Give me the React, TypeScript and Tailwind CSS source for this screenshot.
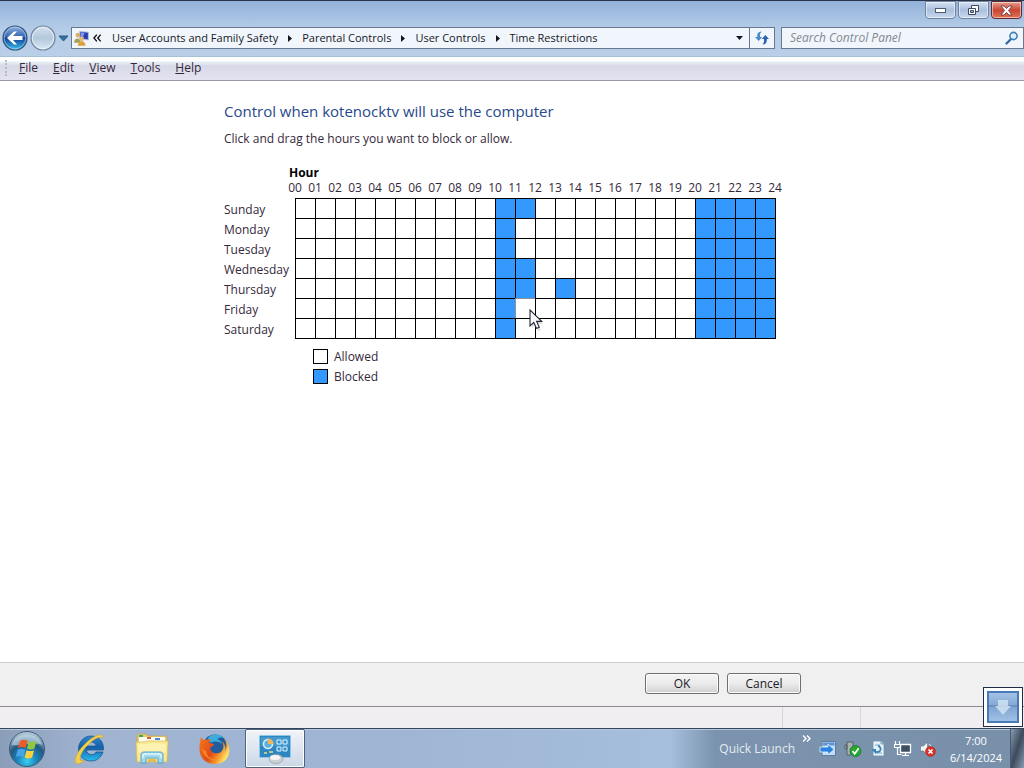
import { useState } from "react";
import type { ReactNode } from "react";

const DAYS = ["Sunday", "Monday", "Tuesday", "Wednesday", "Thursday", "Friday", "Saturday"];
const HOURS = Array.from({ length: 24 }, (_, i) => i);
const EVENING = [20, 21, 22, 23];
const INITIAL: number[][] = [
  [10, 11, ...EVENING],
  [10, ...EVENING],
  [10, ...EVENING],
  [10, 11, ...EVENING],
  [10, 11, 13, ...EVENING],
  [10, ...EVENING],
  [10, ...EVENING],
];

const pad = (n: number) => String(n).padStart(2, "0");

function Pointer() {
  return (
    <svg className="pointer-events-none absolute left-3 top-2.5 z-10" width="16" height="22" viewBox="0 0 16 22">
      <path d="M4 4v15l3-3 3 6 3-1-3-6h5z" fill="#999" opacity=".35" />
      <path d="M2 1v16l3.8-3.6 2.7 6 2.8-1.2-2.7-5.8h5.2z" fill="#f7f9fb" stroke="#222736" strokeWidth="1.1" />
    </svg>
  );
}

function BackIcon() {
  return (
    <svg width="26" height="26" viewBox="0 0 26 26">
      <defs>
        <linearGradient id="back" x1="0" y1="0" x2="0" y2="1">
          <stop offset="0" stopColor="#8fb2e2" />
          <stop offset=".45" stopColor="#3467b8" />
          <stop offset=".5" stopColor="#123f94" />
          <stop offset="1" stopColor="#35c4f2" />
        </linearGradient>
      </defs>
      <circle cx="13" cy="13" r="12" fill="url(#back)" stroke="#3a5379" strokeWidth="1.2" />
      <circle cx="13" cy="13" r="10.8" fill="none" stroke="#c9def5" strokeWidth=".8" opacity=".7" />
      <path d="M5 13l7-6.5h3l-4 4.500h9.500v4H11l4 4.500h-3z" fill="#fff" />
    </svg>
  );
}

function ForwardIcon() {
  return (
    <svg width="26" height="26" viewBox="0 0 26 26">
      <defs>
        <linearGradient id="fwd" x1="0" y1="0" x2="0" y2="1">
          <stop offset="0" stopColor="#d5e2f0" />
          <stop offset=".5" stopColor="#b3c8dc" />
          <stop offset="1" stopColor="#dbeaf5" />
        </linearGradient>
      </defs>
      <circle cx="13" cy="13" r="12" fill="url(#fwd)" stroke="#70849c" strokeWidth="1.2" />
      <circle cx="13" cy="13" r="10.7" fill="none" stroke="#eef5fb" opacity=".8" />
    </svg>
  );
}

function UsersIcon() {
  return (
    <svg width="16" height="16" viewBox="0 0 16 16">
      <path d="M6 1l9 1v8l-9-1z" fill="#2a3fb4" stroke="#b9c3dd" />
      <path d="M7 2l4 .5L9 8l-2-.5z" fill="#8098ec" />
      <circle cx="4" cy="5" r="2.4" fill="#d9ae6a" />
      <path d="M0 13c0-6 7-6 7 0z" fill="#a3a15e" />
      <circle cx="8" cy="9" r="2.5" fill="#e6b877" />
      <path d="M4 16c0-6 8-6 8 0z" fill="#d9a23a" />
    </svg>
  );
}

function RefreshIcon() {
  return (
    <svg width="16" height="16" viewBox="0 0 16 16" fill="#2c62b4">
      <path d="M6.500 1.500C4 2 3 4 3.200 7H1l3.700 4L8.200 7H6C5.800 4.500 6 3 7.500 2z" fill="#4b8acb" />
      <path d="M9.500 14.500c2.500-.5 3.500-2.500 3.300-5.500H15l-3.700-4L7.800 9H10c.2 2.500 0 4-1.500 5z" />
    </svg>
  );
}

function SearchIcon() {
  return (
    <svg width="14" height="14" viewBox="0 0 14 14">
      <path d="M1.500 12.500L6 8" stroke="#3769a2" strokeWidth="2.400" strokeLinecap="round" />
      <circle cx="8.500" cy="5" r="3.600" fill="#e1f1fa" stroke="#3e7fb2" strokeWidth="1.600" />
    </svg>
  );
}

function StartOrb() {
  return (
    <svg width="38" height="38" viewBox="0 0 38 38">
      <defs>
        <radialGradient id="orb" cx=".5" cy=".85" r=".8">
          <stop offset="0" stopColor="#39d0f2" />
          <stop offset=".35" stopColor="#1a84bb" />
          <stop offset=".65" stopColor="#235982" />
          <stop offset="1" stopColor="#b0c7d7" />
        </radialGradient>
      </defs>
      <circle cx="19" cy="19" r="17.500" fill="url(#orb)" stroke="#3c5a75" />
      <path d="M4 15C7 1 31 1 34 15 24 11 14 17 4 15z" fill="#e0eef5" opacity=".5" />
      <path d="M12 11c3-2 5-1.500 7.500-.3L17.700 18c-3-1.300-5-1.200-7.700.2z" fill="#ee5a24" />
      <path d="M20.800 11.200c2.500 1.200 5 1.200 7.700-.2l-2 7.500c-2.700 1.300-4.800 1.100-7.500 0z" fill="#8fc740" />
      <path d="M9.600 19.800c2.700-1.500 5-1.400 7.700-.1l-2 7.200c-2.500-1.200-4.800-1.300-7.500.2z" fill="#48a4e8" />
      <path d="M18.600 20.200c2.700 1.200 4.800 1.200 7.500 0l-2 7.200c-2.500 1.400-4.900 1.300-7.500 0z" fill="#fccf3c" />
    </svg>
  );
}

function ExplorerE() {
  return (
    <svg width="32" height="32" viewBox="0 0 32 32">
      <defs>
        <linearGradient id="ie" x1="0" y1="0" x2="0" y2="1">
          <stop offset="0" stopColor="#2c87cf" />
          <stop offset=".45" stopColor="#1560a9" />
          <stop offset="1" stopColor="#28bdf0" />
        </linearGradient>
      </defs>
      <path fillRule="evenodd" d="M17 3c8 0 13 6 12.500 14H12.500c.3 5 7.500 6.500 9.500 2h7c-2 6-6.500 9-12 9C9.500 28 4.500 22.500 4.500 16S9.500 3 17 3zm-4.400 10H22c-.5-5-8.500-5.500-9.400 0z" fill="url(#ie)" stroke="#164f87" strokeWidth=".7" />
      <path d="M29 5c1-5-8-4-16 4C4 17-1 27 2 30c2 2 6 0 9-3-3 1-5 1-5-1 0-4 4-11 9-15C20 6 26 3 29 5z" fill="#f3cf4c" stroke="#c79a2a" strokeWidth=".5" />
    </svg>
  );
}

function FolderIcon() {
  return (
    <svg width="34" height="32" viewBox="0 0 34 32">
      <path d="M2 3c0-1 1-2 2-2h7l2 2h17c1 0 2 1 2 2v23H2z" fill="#e9ca68" stroke="#c8a346" strokeWidth=".7" />
      <path d="M4 4h26v5H4z" fill="#fffef2" />
      <path d="M4 2h4v2H4z" fill="#35a65c" />
      <path d="M12 4h4v2h-4z" fill="#de5b37" />
      <path d="M20 5h5v2h-5z" fill="#4e87d5" />
      <path d="M1 9c7 1 11-2 16-1h15c1 0 1 1 1 2l-1 19H2z" fill="#fae994" stroke="#d8b957" strokeWidth=".7" />
      <path d="M3 11c9 1 12-2 28 0l-.5 8H3.500z" fill="#fff8c2" opacity=".6" />
      <path d="M6 30v-8c0-2 1-3 3-3h16c2 0 3 1 3 3v8h-5v-5H11v5z" fill="#a0d8ed" stroke="#54a4cb" />
      <path d="M8 25v-2c0-1 1-2 2-2h14c1 0 2 1 2 2v2" fill="none" stroke="#e0f6fa" strokeWidth="1.500" />
      <path d="M13 26h8v3h-8z" fill="#e0bd59" />
    </svg>
  );
}

function FirefoxIcon() {
  return (
    <svg width="32" height="32" viewBox="0 0 32 32">
      <defs>
        <linearGradient id="fox" x1="0" y1="0" x2="1" y2=".5">
          <stop offset="0" stopColor="#f47a1c" />
          <stop offset=".55" stopColor="#e24a18" />
          <stop offset=".8" stopColor="#f6962a" />
          <stop offset="1" stopColor="#ffe066" />
        </linearGradient>
      </defs>
      <circle cx="17" cy="14" r="12.500" fill="#225c9d" />
      <path d="M10 5C13 1 21 0 26 5c-3-1-5 0-7 1 3 1 5 3 5 5-4-3-8-3-11-1-1-1-3-3-3-5z" fill="#3bacdb" />
      <path d="M3 4c1 2 2 3 4 3 2-1 4-1 6 0-1 1-2 2-2 3l5 1c0 2-2 2-4 4 1 5 6 7 11 4 3-3 3-7 1-11 4 4 4 8 3 11 2-5 2-9-1-13 5 4 6 9 5 14-1 7-7 11-14 11C8 31 2 25 1.500 17 1.200 12 2 8 3 4z" fill="url(#fox)" />
      <path d="M4 15c1 8 7 13 15 12-8-1-10-4-11-9-2 0-3-1-4-3z" fill="#fba532" opacity=".65" />
    </svg>
  );
}

function ControlPanelIcon() {
  return (
    <svg width="34" height="32" viewBox="0 0 34 32">
      <rect x="1.500" y="2.500" width="31" height="22" rx="1" fill="#2d86c2" stroke="#8fc8e6" />
      <rect x="3" y="4" width="28" height="9" fill="#5cabd9" opacity=".5" />
      <circle cx="10" cy="11" r="4.500" fill="#5fb0dc" stroke="#d5eefa" strokeWidth="1.600" />
      <path d="M10 11V5.500A5.500 5.500 0 0 1 15.500 11z" fill="#f3b45a" />
      <path d="M6 20h3M11 19h4" stroke="#e7dc83" strokeWidth="1.500" fill="none" />
      <path d="M19 7h4v4h-4zM25 7h4v4h-4zM19 14h4v4h-4zM25 14h4v4h-4z" fill="#3790cd" stroke="#e0f6ff" />
      <ellipse cx="18" cy="26" rx="7" ry="4.500" fill="#cbd1d4" stroke="#8e9da5" strokeWidth=".7" />
      <ellipse cx="17" cy="24.500" rx="5" ry="2.500" fill="#f6f7f5" />
    </svg>
  );
}

function TrayWindow() {
  return (
    <svg width="18" height="18" viewBox="0 0 18 18">
      <path d="M3 1.500h13.500v14H3z" fill="#c6dcf2" stroke="#5c7ba5" />
      <path d="M4 2.500h11.500v3H4z" fill="#5d94d8" />
      <path d="M1 7h8V4l6 5.500L9 15v-3H1z" fill="#2c83df" stroke="#e2f2ff" strokeWidth=".8" />
    </svg>
  );
}

function TraySafe() {
  return (
    <svg width="18" height="18" viewBox="0 0 18 18">
      <path d="M3 2h6v6H7v7H3zM1 5h2v4H1z" fill="#a7b1b0" stroke="#46535a" strokeWidth=".8" />
      <circle cx="11.500" cy="11" r="5.500" fill="#24a82f" stroke="#1d7128" strokeWidth=".7" />
      <path d="M8.500 11l2.200 2.800 4-5.500" stroke="#fff" strokeWidth="1.700" fill="none" />
    </svg>
  );
}

function TrayPage() {
  return (
    <svg width="18" height="18" viewBox="0 0 18 18">
      <path d="M4 1h8l3 3v12H4z" fill="#e6f1f6" stroke="#6f96ad" strokeWidth=".8" />
      <path d="M12 1v3h3" fill="#aecddd" stroke="#6f96ad" strokeWidth=".8" />
      <path d="M6 5h5M6 13h7" stroke="#79abca" />
      <path d="M9 6a3 3 0 1 1-2 5.500" fill="none" stroke="#3984b9" strokeWidth="1.800" />
      <path d="M2 9h5v5z" fill="#3984b9" />
    </svg>
  );
}

function TrayNetwork() {
  return (
    <svg width="18" height="18" viewBox="0 0 18 18" fill="none" stroke="#fff">
      <path d="M6.500 4.500h10v8h-10z" fill="#3d5063" strokeWidth="1.300" />
      <path d="M11.500 13v2.500M8 15.500h7M1.500 1v3M5.500 1v3M.5 4.500h6v3h-6zM3.500 8v6.500h4" strokeWidth="1.200" />
    </svg>
  );
}

function TrayMuted() {
  return (
    <svg width="18" height="18" viewBox="0 0 18 18">
      <path d="M1.500 6h3l4-4v13l-4-4h-3z" fill="#f3f5f5" stroke="#65717c" strokeWidth=".6" />
      <path d="M10 4c2 1 2.500 3 2.500 5" stroke="#e7edf1" fill="none" />
      <circle cx="11.500" cy="11.500" r="5" fill="#d5322a" stroke="#a9332f" strokeWidth=".7" />
      <path d="M9.500 9.500l4 4m0-4l-4 4" stroke="#fff" strokeWidth="1.600" />
    </svg>
  );
}

function Triangle({ down = false }: { down?: boolean }) {
  return down ? (
    <svg width="7" height="4" viewBox="0 0 7 4"><path d="M0 0h7L3.500 4z" fill="#151826" /></svg>
  ) : (
    <svg width="4" height="7" viewBox="0 0 4 7"><path d="M0 0l4 3.500L0 7z" fill="#12141c" /></svg>
  );
}

function CaptionButton({ label, close = false, children }: { label: string; close?: boolean; children: ReactNode }) {
  const tone = close
    ? "border-[#602a30] bg-linear-to-b from-[#e3a092] via-[#c94433] to-[#df7256]"
    : "border-[#71839f] bg-linear-to-b from-[#d5e2f2] via-[#a9bfdc] to-[#c8d9ee]";
  return (
    <button aria-label={label} className={`flex h-[18px] w-[31px] items-center justify-center rounded-b-sm border shadow-[inset_0_0_0_1px_rgba(255,255,255,0.5)] ${tone}`}>
      {children}
    </button>
  );
}

function TaskButton({ label, active = false, children }: { label: string; active?: boolean; children: ReactNode }) {
  return (
    <button
      aria-label={label}
      className={`flex h-full items-center justify-center ${active ? "w-[60px] rounded-xs border border-[#4d627f] bg-linear-to-b from-[#f1f4f9] to-[#cbd7e7] shadow-[inset_0_0_0_1px_#fff]" : "w-[62px]"}`}
    >
      {children}
    </button>
  );
}

export default function App() {
  const [blocked, setBlocked] = useState(INITIAL);
  const toggle = (day: number, hour: number) =>
    setBlocked((rows) =>
      rows.map((row, i) => (i !== day ? row : row.includes(hour) ? row.filter((h) => h !== hour) : [...row, hour])),
    );

  return (
    <div className="relative flex min-h-screen flex-col bg-white font-['Open_Sans','Noto_Sans',sans-serif] text-xs text-[#35283c]">
      <header className="border-t border-[#29344a] bg-linear-to-b from-[#93b2da] via-[#b4cce8] to-[#bacfe8]">
        <div className="flex h-[25px] items-start justify-end gap-0.5 px-0.5">
          <CaptionButton label="Minimize">
            <svg width="11" height="5" viewBox="0 0 11 5"><rect x=".5" y=".5" width="10" height="4" fill="#fff" stroke="#4e5b72" /></svg>
          </CaptionButton>
          <CaptionButton label="Restore">
            <svg width="13" height="12" viewBox="0 0 13 12" stroke="#3c495f">
              <path d="M4.500 1.500h7v6h-7z" fill="#fff" />
              <path d="M1.500 4.500h7v6h-7z" fill="#fff" />
              <path d="M3.500 6.500h3v2h-3z" fill="#9fb4d0" />
            </svg>
          </CaptionButton>
          <CaptionButton label="Close" close>
            <svg width="13" height="11" viewBox="0 0 13 11"><path d="M1 1h3l2.500 2.500L9 1h3L8.500 5.500 12 10H9L6.500 7.500 4 10H1l3.500-4.500z" fill="#fff" stroke="#5d3038" strokeWidth=".8" /></svg>
          </CaptionButton>
        </div>
        <nav className="flex h-[31px] items-start border-b border-[#a8bfd5]" aria-label="Location">
          <div className="flex h-6 w-[71px] shrink-0 items-center gap-0.5 pl-0.5">
            <button aria-label="Back"><BackIcon /></button>
            <button aria-label="Forward" disabled><ForwardIcon /></button>
            <button aria-label="Recent pages">
              <svg width="11" height="7" viewBox="0 0 11 7"><path d="M1 1h9L5.500 6z" fill="#2675aa" stroke="#35557c" /></svg>
            </button>
          </div>
          <div className="mt-px flex h-[22px] min-w-0 flex-1 items-center border border-[#67788f] bg-[#f0f6fc]">
            <div className="flex min-w-0 flex-1 items-center gap-2.5 whitespace-nowrap pl-0.5 text-[11px] text-[#191827]">
              <span className="flex w-7 items-center gap-1">
                <UsersIcon />
                <svg width="9" height="8" viewBox="0 0 9 8"><path d="M4 0.500L1 4l3 3.500M8 .5L5 4l3 3.500" stroke="#111" strokeWidth="1.400" fill="none" /></svg>
              </span>
              <a href="#accounts">User Accounts and Family Safety</a>
              <Triangle />
              <a href="#parental">Parental Controls</a>
              <Triangle />
              <a href="#user">User Controls</a>
              <Triangle />
              <a href="#time">Time Restrictions</a>
            </div>
            <button aria-label="Previous locations" className="flex h-full w-5 items-center justify-center"><Triangle down /></button>
            <button aria-label="Refresh" className="flex h-full w-[25px] items-center justify-center border-l border-[#67788f]"><RefreshIcon /></button>
          </div>
          <label className="ml-1.5 mt-px flex h-[22px] w-[243px] items-center border border-[#67788f] bg-[#f0f6fc] pl-2 pr-1">
            <input aria-label="Search Control Panel" placeholder="Search Control Panel" className="min-w-0 flex-1 bg-transparent italic outline-none placeholder:text-[#85898f]" />
            <SearchIcon />
          </label>
        </nav>
      </header>

      <div role="menubar" className="flex h-6 items-start border-b border-[#9998a8] bg-[linear-gradient(#fff_0px,#fff_4px,#e7f0f5_5px,#d8d9e8_9px,#e5e3f0_23px)] pl-[5px] pt-[3px]">
        <span className="mr-[10px] h-4 border-l-2 border-dotted border-[#b9bbc9]" />
        {["File", "Edit", "View", "Tools", "Help"].map((item) => (
          <button key={item} role="menuitem" className="mr-[11px] px-0.5 leading-4">
            <span className="underline">{item[0]}</span>{item.slice(1)}
          </button>
        ))}
      </div>

      <main className="flex-1 pl-56 pt-5">
        <h1 className="text-[15px] leading-5 text-[#27498b]">Control when kotenocktv will use the computer</h1>
        <p className="mt-2.5 leading-4">Click and drag the hours you want to block or allow.</p>

        <section className="mt-[18px] w-max" aria-label="Time restrictions">
          <div className="ml-[65px] text-xs font-bold leading-[15px] text-black">Hour</div>
          <div className="-mr-2.5 ml-[61px] flex h-[18px] text-center leading-4">
            {[...HOURS, 24].map((h) => <span key={h} className="w-5">{pad(h)}</span>)}
          </div>
          <table className="border-separate border-spacing-0">
            <tbody>
              {DAYS.map((day, d) => (
                <tr key={day} className="group h-5">
                  <th scope="row" className="w-[71px] p-0 pt-1 text-left align-top font-normal leading-4">{day}</th>
                  {HOURS.map((h) => {
                    const isBlocked = blocked[d].includes(h);
                    const focused = day === "Friday" && h === 11;
                    return (
                      <td key={h} className={`relative h-5 w-5 border-l border-t p-0 last:border-r group-last:border-b ${focused ? "border-[#8f8f9d]" : "border-black"}`}>
                        <button
                          aria-label={`${day} ${pad(h)}:00`}
                          aria-pressed={isBlocked}
                          onClick={() => toggle(d, h)}
                          className={`block h-[19px] w-[19px] ${isBlocked ? "bg-[#3399ff]" : "bg-white"}`}
                        />
                        {focused && <Pointer />}
                      </td>
                    );
                  })}
                </tr>
              ))}
            </tbody>
          </table>
          <ul className="ml-[89px] mt-2 leading-[19px]">
            <li className="flex h-5 items-start gap-1.5"><span className="mt-0.5 h-[15px] w-[15px] border border-black bg-white" />Allowed</li>
            <li className="flex h-5 items-start gap-1.5"><span className="mt-0.5 h-[15px] w-[15px] border border-black bg-[#3399ff]" />Blocked</li>
          </ul>
        </section>
      </main>

      <footer className="flex h-11 items-start justify-end gap-2 border-t border-[#cdcdcd] bg-[#f0f0f0] pr-[223px] pt-2.5">
        {["OK", "Cancel"].map((label) => (
          <button key={label} className="h-[21px] w-[74px] rounded-[3px] border border-[#707070] bg-linear-to-b from-[#f4f4f4] via-[#ebebeb] to-[#d0d0d0] leading-[18px] text-[#201a28] shadow-[inset_0_0_0_1px_#fafafa]">{label}</button>
        ))}
      </footer>
      <div role="status" className="flex h-[22px] justify-end border-t border-[#8d8a8e] bg-[#f0eef0]">
        <span className="w-[78px] border-l border-[#d8d6da]" />
        <span className="w-[164px] border-l border-[#d8d6da]" />
      </div>

      <div className="flex h-10 items-stretch border-t border-[#33465f] bg-[linear-gradient(90deg,#8b9eb9_0px,#a0b4d2_90px,#9fb5d3_400px,#a5bfdd_670px,#7b93ae_715px,#7990aa_100%)] shadow-[inset_0_1px_0_#b7c6d9]">
        <button aria-label="Start" className="flex w-[54px] items-center justify-center"><StartOrb /></button>
        <div className="flex flex-1 pl-[5px]">
          <TaskButton label="Internet Explorer"><ExplorerE /></TaskButton>
          <TaskButton label="Windows Explorer"><FolderIcon /></TaskButton>
          <TaskButton label="Firefox"><FirefoxIcon /></TaskButton>
          <TaskButton label="Control Panel" active><ControlPanelIcon /></TaskButton>
        </div>
        <div className="flex items-center text-[#e4ebf2]">
          <span>Quick Launch</span>
          <button aria-label="Show more" className="mb-5 ml-[7px] mr-2">
            <svg width="9" height="7" viewBox="0 0 9 7"><path d="M1 .5l3 3-3 3M5 .5l3 3-3 3" stroke="#fff" strokeWidth="1.400" fill="none" /></svg>
          </button>
          <div className="flex gap-[7px]">
            <button aria-label="Remote window"><TrayWindow /></button>
            <button aria-label="Safely remove hardware"><TraySafe /></button>
            <button aria-label="Updates"><TrayPage /></button>
            <button aria-label="Network"><TrayNetwork /></button>
            <button aria-label="Volume muted"><TrayMuted /></button>
          </div>
          <button className="ml-2 w-[62px] text-center text-[11px] leading-[17px] text-white">
            7:00<br />6/14/2024
          </button>
        </div>
        <button aria-label="Show desktop" className="ml-[3px] w-[14px] border-l border-[#49596e] bg-linear-to-br from-[#8b9caf] via-[#3c4b5e] to-[#8a9db1]" />
      </div>

      <button aria-label="Scroll down" className="absolute bottom-[41px] right-px flex h-10 w-10 items-center justify-center border border-[#1e2c46] bg-white">
        <svg width="32" height="32" viewBox="0 0 32 32">
          <defs>
            <linearGradient id="down" x1="0" y1="0" x2="0" y2="1">
              <stop offset="0" stopColor="#a7c4e6" />
              <stop offset=".5" stopColor="#7fa5d3" />
              <stop offset="1" stopColor="#a2c3e7" />
            </linearGradient>
          </defs>
          <rect x="1" y="1" width="30" height="30" fill="url(#down)" stroke="#487ab9" strokeWidth="2" />
          <path d="M0 15h32" stroke="#41648f" opacity=".6" />
          <path d="M11 9h10v6h3L16 24 8 15h3z" fill="#d5e6f3" opacity=".8" />
        </svg>
      </button>
    </div>
  );
}
